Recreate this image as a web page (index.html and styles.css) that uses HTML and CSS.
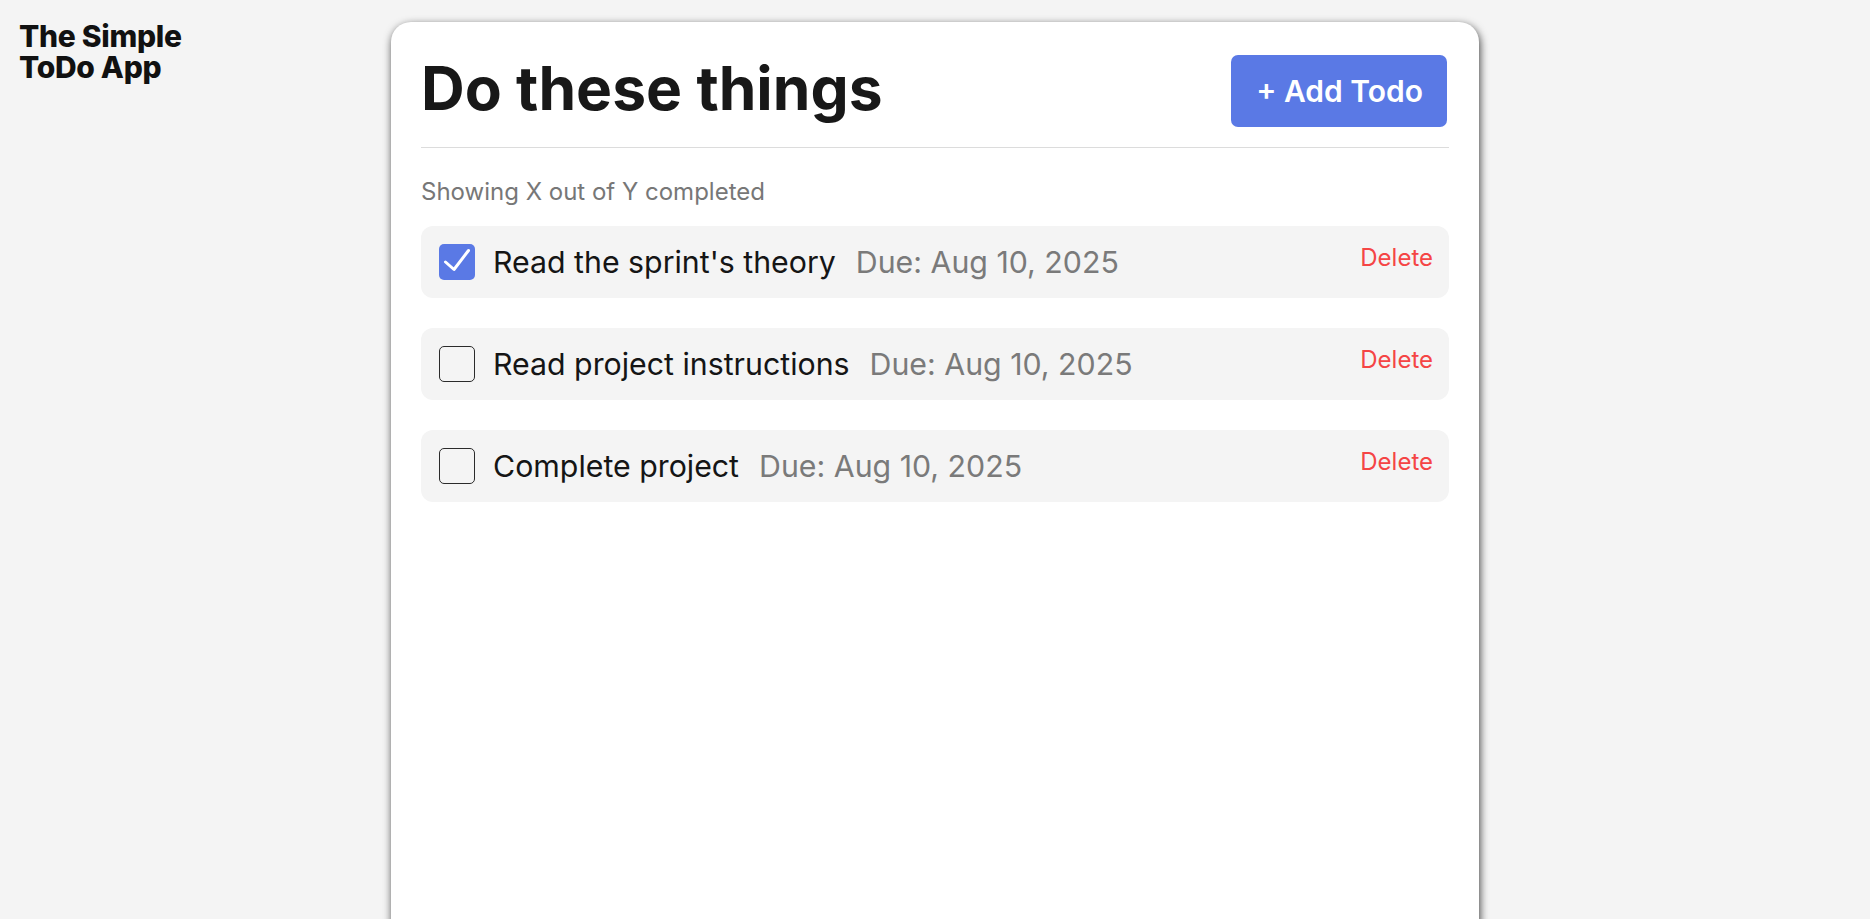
FILE: index.html
```html
<!DOCTYPE html>
<html lang="en">
<head>
<meta charset="utf-8">
<title>The Simple ToDo App</title>
<link rel="stylesheet" href="styles.css">
</head>
<body>
<div class="page">
  <div class="logo">The Simple<br>ToDo App</div>
  <main class="card">
    <header class="card-header">
      <h1 class="title">Do these things</h1>
      <button class="add-btn">+ Add Todo</button>
    </header>
    <p class="counter">Showing X out of Y completed</p>
    <ul class="todo-list">
      <li class="todo">
        <span class="check checked">
          <svg viewBox="0 0 36 36" width="36" height="36"><path d="M6.5 18 L15 25.5 L29.5 6.5" fill="none" stroke="#fff" stroke-width="3" stroke-linecap="round" stroke-linejoin="round"/></svg>
        </span>
        <span class="todo-name">Read the sprint's theory</span>
        <span class="todo-due">Due: Aug 10, 2025</span>
        <button class="delete">Delete</button>
      </li>
      <li class="todo">
        <span class="check"></span>
        <span class="todo-name">Read project instructions</span>
        <span class="todo-due">Due: Aug 10, 2025</span>
        <button class="delete">Delete</button>
      </li>
      <li class="todo">
        <span class="check"></span>
        <span class="todo-name">Complete project</span>
        <span class="todo-due">Due: Aug 10, 2025</span>
        <button class="delete">Delete</button>
      </li>
    </ul>
  </main>
  <div class="spacer"></div>
</div>
</body>
</html>
```

FILE: styles.css
```css
* { box-sizing: border-box; }

html, body {
  margin: 0;
  height: 100%;
}

body {
  background: #f4f4f4;
  font-family: Inter, "Noto Sans", "Liberation Sans", sans-serif;
  color: #161616;
  overflow: hidden;
}

.page {
  display: grid;
  grid-template-columns: 1fr 1088px 1fr;
  min-height: 100vh;
}

.logo {
  padding: 21px 0 0 19px;
  font-size: 30px;
  font-weight: 800;
  line-height: 31px;
  letter-spacing: -0.3px;
  color: #111;
}

.card {
  margin-top: 22px;
  background: #fff;
  border-radius: 20px;
  box-shadow: 1px 3px 9px rgba(0, 0, 0, 0.75);
  padding: 33px 30px 0 30px;
  min-height: 1000px;
}

.card-header {
  display: flex;
  align-items: flex-start;
  justify-content: space-between;
  padding-bottom: 20px;
  border-bottom: 1px solid #dcdcdc;
}

.title {
  margin: 0;
  font-size: 60.5px;
  font-weight: 700;
  line-height: 66px;
  color: #181818;
}

.add-btn {
  height: 72px;
  padding: 0 24px 0 25px;
  margin-right: 2px;
  border: none;
  border-radius: 7px;
  background: #5a79e5;
  color: #fff;
  font-family: inherit;
  font-size: 30px;
  font-weight: 600;
}

.counter {
  margin: 29px 0 20px 0;
  font-size: 24px;
  color: #777;
  line-height: 29px;
}

.todo-list {
  list-style: none;
  margin: 0;
  padding: 0;
  display: flex;
  flex-direction: column;
  gap: 30px;
}

.todo {
  display: flex;
  align-items: center;
  height: 72px;
  padding: 0 16px 0 18px;
  background: #f4f4f4;
  border-radius: 12px;
}

.check {
  flex: none;
  width: 36px;
  height: 36px;
  border: 1.5px solid #2b2b2b;
  border-radius: 5px;
  margin-right: 18px;
  display: flex;
}

.check.checked {
  border: none;
  background: #5a79e5;
}

.todo-name {
  font-size: 30.3px;
  color: #151515;
  margin-right: 20px;
}

.todo-due {
  font-size: 30.3px;
  color: #7a7a7a;
}

.delete {
  margin-left: auto;
  align-self: flex-start;
  margin-top: 17px;
  padding: 0;
  border: none;
  background: none;
  color: #f54545;
  font-family: inherit;
  font-size: 24px;
}
```
